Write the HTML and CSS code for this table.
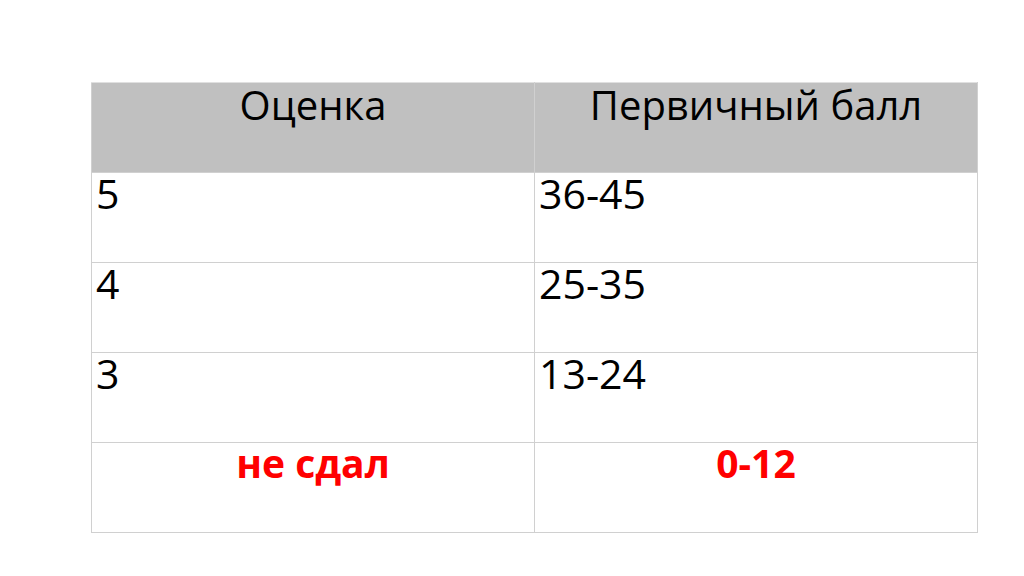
FILE: index.html
```html
<!DOCTYPE html>
<html lang="ru">
<head>
<meta charset="utf-8">
<title>Оценка</title>
<link rel="stylesheet" href="styles.css">
</head>
<body>
<div class="slide">
  <table class="grades">
    <thead>
      <tr>
        <th>Оценка</th>
        <th>Первичный балл</th>
      </tr>
    </thead>
    <tbody>
      <tr><td>5</td><td>36-45</td></tr>
      <tr><td>4</td><td>25-35</td></tr>
      <tr><td>3</td><td>13-24</td></tr>
      <tr class="fail"><td>не сдал</td><td>0-12</td></tr>
    </tbody>
  </table>
</div>
</body>
</html>
```

FILE: styles.css
```css
html, body {
  margin: 0;
  padding: 0;
  background: #ffffff;
}

.slide {
  width: 1024px;
  height: 576px;
  padding: 82px 0 0 91px;
  box-sizing: border-box;
  font-family: "Open Sans", "Liberation Sans", sans-serif;
  color: #000;
}

.grades {
  border-collapse: collapse;
  width: 887px;
  table-layout: fixed;
}

.grades th,
.grades td {
  border: 1px solid #d0d0d0;
  vertical-align: top;
  padding: 0 4px;
  height: 90px;
  box-sizing: border-box;
}

.grades th {
  background: #c0c0c0;
  font-weight: normal;
  font-size: 40px;
  line-height: 44px;
  text-align: center;
  border-top-color: #e0e0e0;
}

.grades td {
  font-size: 41px;
  line-height: 40px;
  text-align: left;
}

.grades .fail td {
  color: #ff0000;
  font-weight: bold;
  text-align: center;
  font-size: 39px;
  line-height: 40px;
}
```
